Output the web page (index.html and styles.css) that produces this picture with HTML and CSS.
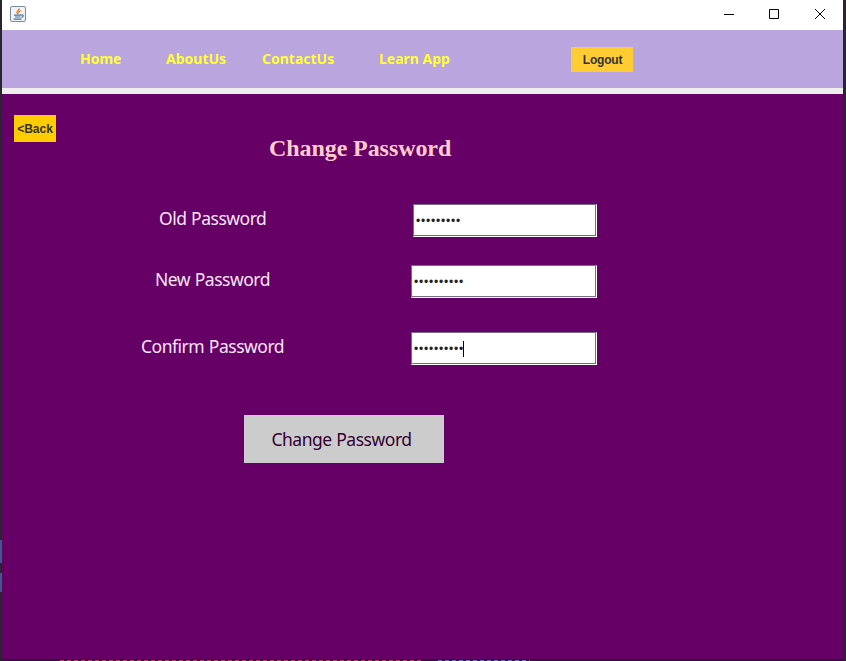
FILE: index.html
```html
<!DOCTYPE html>
<html lang="en">
<head>
<meta charset="utf-8">
<title>Change Password</title>
<link rel="stylesheet" href="styles.css">
</head>
<body>
<div class="window">
  <header class="titlebar">
    <svg class="java" width="16" height="16" viewBox="0 0 16 16" fill="none">
      <rect x=".5" y=".5" width="15" height="15" rx="1.5" fill="#f1f4f7" stroke="#7c8c9d"/>
      <path d="M9.300 2.500C9.500 4.300 6.300 4.800 7 6.600L8 8M10.800 4.500C8.600 5.300 8.600 6 9.200 7.300" stroke="#e8791e" stroke-width="1.300"/>
      <path d="M4 9.200h7M5 11h5.500M3.500 13.200h8M11 9c3-.8 2.800 2 .3 2.300" stroke="#456f9b" stroke-width="1.200"/>
    </svg>
    <svg class="controls" width="102" height="12" viewBox="0 0 102 12" fill="none" stroke="#000">
      <path d="M0 6.500h10M45.500 1.500h9v9h-9zM91 1l10 10M101 1L91 11"/>
    </svg>
  </header>
  <nav class="navbar">
    <a class="link home">Home</a>
    <a class="link about">AboutUs</a>
    <a class="link contact">ContactUs</a>
    <a class="link learn">Learn App</a>
    <button class="btn logout">Logout</button>
  </nav>
  <main class="panel">
    <button class="btn back">&lt;Back</button>
    <h1 class="heading">Change Password</h1>
    <form class="form">
      <div class="row old"><label class="label">Old Password</label><div class="field"><span class="dots">•••••••••</span></div></div>
      <div class="row new"><label class="label">New Password</label><div class="field"><span class="dots">••••••••••</span></div></div>
      <div class="row confirm"><label class="label">Confirm Password</label><div class="field"><span class="dots">••••••••••</span><i class="caret"></i></div></div>
      <button class="btn submit" type="button">Change Password</button>
    </form>
  </main>
  <div class="edge"></div>
</div>
</body>
</html>
```
FILE: styles.css
```css
* { box-sizing: border-box; }
body { margin: 0; height: 661px; overflow: hidden; padding: 0 3px 0 2px; background: linear-gradient(#25262e 0 540px, #40598a 540px 563px, #25262e 563px 573px, #40598a 573px 592px, #25262e 592px); }
.window { height: 661px; background: #eee; display: flex; flex-direction: column; box-shadow: 3px 0 0 #292333; }
.titlebar { height: 30px; flex: none; background: #fff; display: flex; justify-content: space-between; padding: 6px 17px 0 8px; }
.controls { margin-top: 2px; }
.navbar { height: 58px; flex: none; background: #baa5df; display: flex; align-items: center; padding-left: 78px; margin-bottom: 6px; }
.link { font: bold 14px/20px "Noto Sans", sans-serif; color: #ff3; white-space: nowrap; }
.home { width: 86px; }
.about { width: 96px; }
.contact { width: 117px; }
.learn { width: 192px; }
.btn { border: 0; padding: 0; margin: 0; display: flex; align-items: center; justify-content: center; font: bold 12px/16px "Liberation Sans", sans-serif; color: #333; white-space: nowrap; }
.logout { width: 62px; height: 25px; background: #fc3; padding: 1px 0 0 1px; letter-spacing: -.2px; }
.panel { flex: 1; background: #606; padding: 21px 0 0 12px; }
.back { width: 42px; height: 27px; background: #fc0; }
.heading { margin: -9px 0 0 255px; font: bold 24px/30px "Liberation Serif", serif; letter-spacing: -.08px; color: #fcc; height: 30px; white-space: nowrap; }
.form { padding-top: 41px; }
.row { display: flex; height: 33px; }
.new { margin-top: 28px; }
.confirm { margin-top: 34px; }
.label { font: 17.500px/28px "Noto Sans", sans-serif; letter-spacing: -.48px; word-spacing: .5px; color: #f5e6f5; white-space: nowrap; }
.old .label { margin-left: 145px; width: 254px; }
.new .label { margin-left: 141px; width: 256px; }
.confirm .label { margin-left: 127px; width: 270px; }
.field { width: 186px; height: 33px; background: #fff; border: 1px solid #fff; border-top-color: #7a6a92; border-left-color: #7a6a92; box-shadow: inset -1px -1px #7a6a92; display: flex; align-items: center; padding-left: 2px; }
.old .field { width: 184px; }
.dots { font: 12px/20px "Liberation Sans", sans-serif; color: #222; letter-spacing: .8px; }
.caret { width: 1px; height: 16px; background: #000; margin-left: -1px; }
.submit { width: 200px; height: 48px; background: #ccc; color: #303; margin: 50px 0 0 230px; padding-right: 5px; font: 17.500px/24px "Noto Sans", sans-serif; letter-spacing: -.48px; word-spacing: .5px; }
.edge { height: 2px; flex: none; background:
  repeating-linear-gradient(90deg, #c33a5a 0 4px, #2b1735 4px 7px) 58px 1px / 363px 1px no-repeat,
  repeating-linear-gradient(90deg, #4a7cc0 0 4px, #2b1735 4px 7px) 436px 1px / 92px 1px no-repeat,
  #2b1735; }
```
